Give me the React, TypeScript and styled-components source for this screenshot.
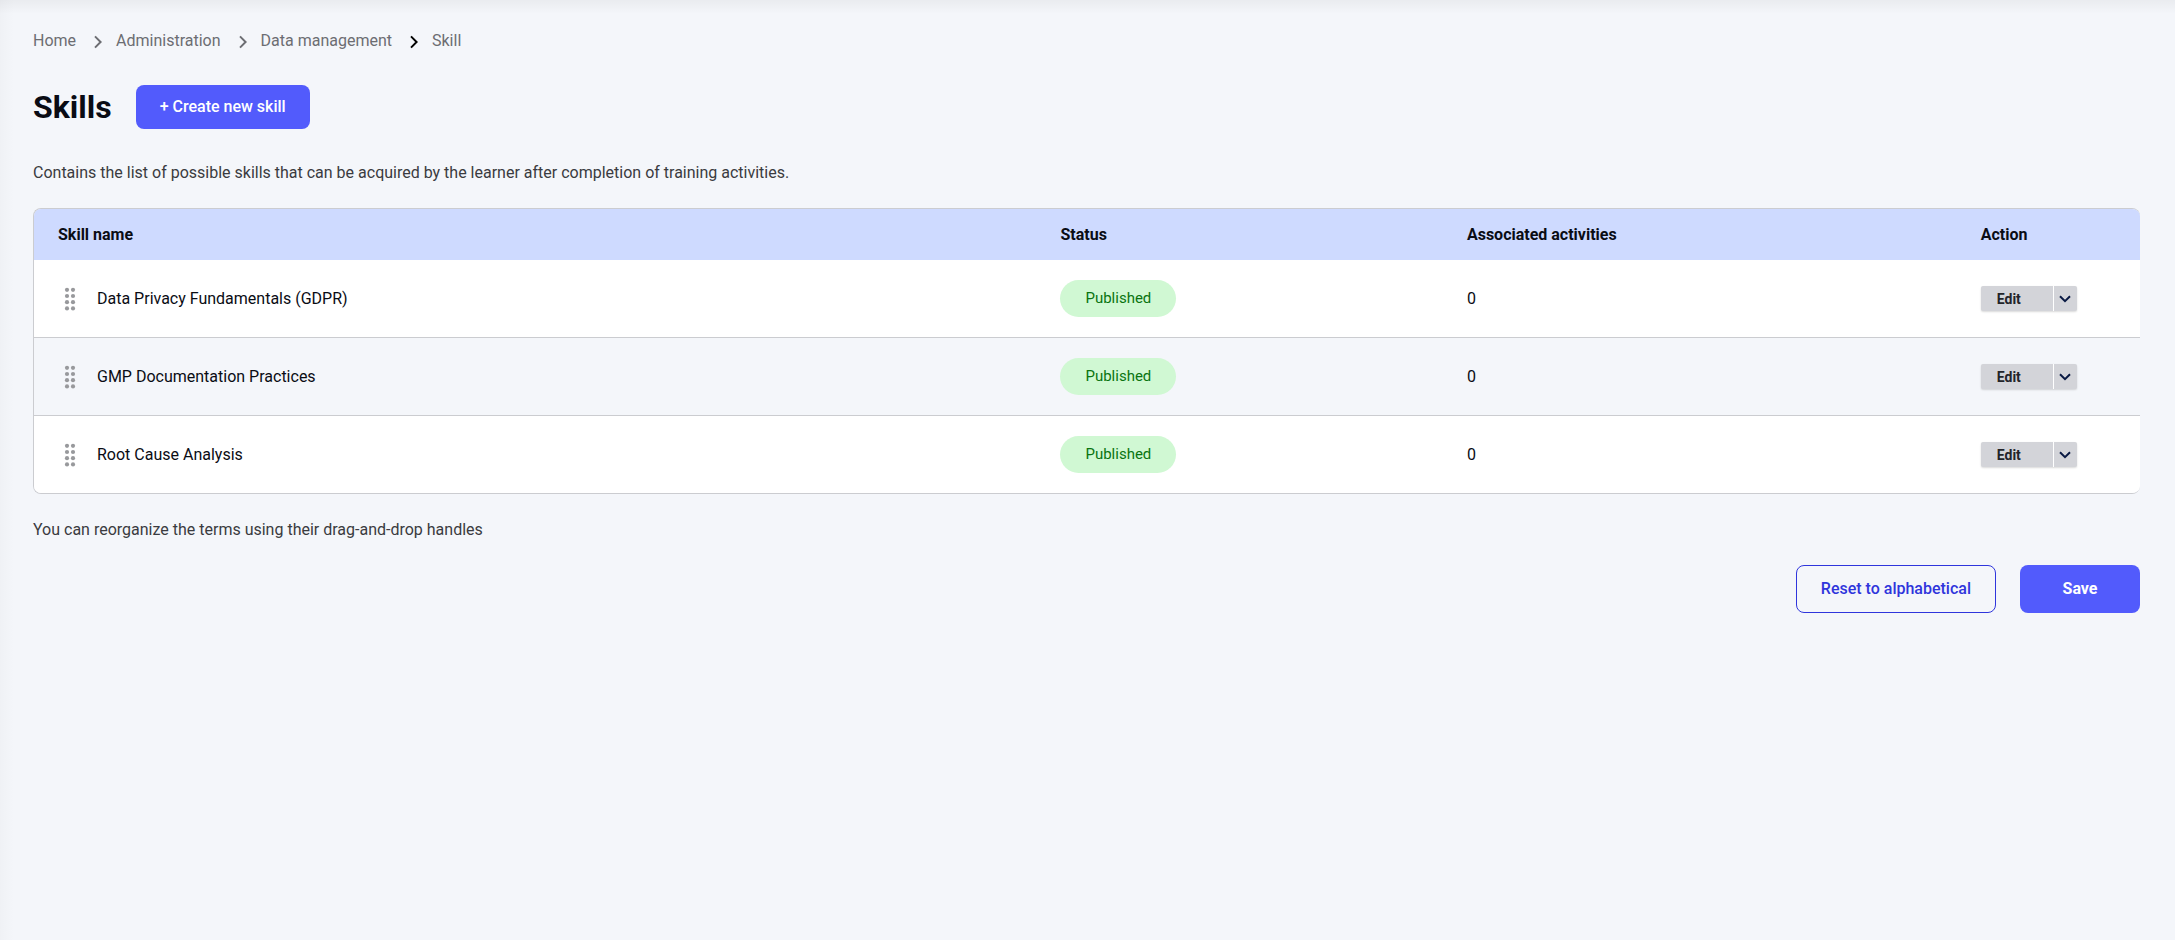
import React from "react";
import styled, { createGlobalStyle } from "styled-components";

const GlobalStyle = createGlobalStyle`
  *, *::before, *::after { box-sizing: border-box; }
  body {
    margin: 0;
    background: #f4f6fa;
    color: #0a0c14;
    font-family: Roboto, "Liberation Sans", sans-serif;
    font-size: 16px;
    line-height: 24px;
  }
  button { font-family: inherit; cursor: pointer; }
`;

const Page = styled.main`
  min-height: 100vh;
  padding: 29px 35px 28px 33px;
  background:
    linear-gradient(to bottom, rgba(0, 0, 0, 0.045), transparent 14px),
    linear-gradient(to right, rgba(0, 0, 0, 0.02), transparent 14px);
`;

const Crumbs = styled.ol`
  display: flex;
  align-items: center;
  margin: 0;
  padding: 0;
  list-style: none;
`;

const Crumb = styled.li`
  display: flex;
  align-items: center;
  color: #6c6d72;
`;

const CrumbLink = styled.a`
  color: inherit;
  text-decoration: none;
`;

const CrumbArrow = styled.svg<{ $strong: boolean }>`
  width: 8px;
  height: 14px;
  margin: 1px 14px 0 18px;
  fill: none;
  stroke: ${(p) => (p.$strong ? "#000" : "#6c6d72")};
  stroke-width: 2;
`;

const TitleRow = styled.header`
  display: flex;
  align-items: center;
  gap: 24px;
  margin-top: 32px;
`;

const Title = styled.h1`
  margin: 0;
  font-size: 32px;
  line-height: 40px;
  font-weight: 700;
`;

const Button = styled.button<{ $variant?: "outline"; $height: number; $minWidth?: number; $weight?: number }>`
  height: ${(p) => p.$height}px;
  min-width: ${(p) => p.$minWidth ?? 0}px;
  padding: 0 24px;
  border: ${(p) => (p.$variant ? "1px solid #2f35dc" : "0")};
  border-radius: 8px;
  background: ${(p) => (p.$variant ? "transparent" : "#525bfc")};
  color: ${(p) => (p.$variant ? "#2f35dc" : "#fff")};
  font-size: 16px;
  line-height: 24px;
  font-weight: ${(p) => p.$weight ?? 500};
`;

const Note = styled.p<{ $top: number }>`
  margin: ${(p) => p.$top}px 0 0;
  color: #3a3b40;
`;

const TableFrame = styled.div`
  margin-top: 23px;
  border: 1px solid #cbccd0;
  border-right: 0;
  border-radius: 8px;
  overflow: hidden;
`;

const Table = styled.table`
  width: 100%;
  table-layout: fixed;
  border-collapse: collapse;
`;

const Column = styled.col<{ $share: number }>`
  width: ${(p) => p.$share}%;
`;

const HeadCell = styled.th`
  height: 51px;
  padding: 0 24px;
  background: #cedaff;
  font-weight: 700;
  text-align: left;
`;

const Row = styled.tr`
  background: #fff;
  &:nth-child(even) { background: #f4f6fa; }
`;

const Cell = styled.td`
  height: 78px;
  padding: 0 24px 1px;
  box-shadow: inset 0 -1px #cbccd0;
  ${Row}:last-child & {
    height: 77px;
    padding-bottom: 0;
    box-shadow: none;
  }
`;

const NameGroup = styled.div`
  display: flex;
  align-items: center;
  padding-left: 6px;
  gap: 21px;
`;

const Handle = styled.button`
  display: flex;
  padding: 0;
  border: 0;
  background: none;
  color: #98999c;
  cursor: grab;
`;

const Badge = styled.span`
  display: flex;
  align-items: center;
  width: max-content;
  height: 37px;
  padding: 0 25px 1px;
  border-radius: 19px;
  background: #d0f8d3;
  color: #0a7410;
  font-size: 15px;
`;

const Split = styled.div`
  display: flex;
  width: 96px;
  height: 25px;
  border-radius: 2px;
  background: #d3d4d9;
  box-shadow: 0 1px 2px rgba(0, 0, 0, 0.15);
`;

const SplitMain = styled.button`
  flex: 1;
  padding: 0 16px;
  border: 0;
  border-right: 1px solid #fff;
  background: none;
  color: #232429;
  font-size: 14px;
  font-weight: 700;
  text-align: left;
`;

const SplitToggle = styled.button`
  display: flex;
  align-items: center;
  justify-content: center;
  width: 23px;
  padding: 0;
  border: 0;
  background: none;
`;

const Actions = styled.div`
  display: flex;
  justify-content: flex-end;
  gap: 24px;
  margin-top: 23px;
`;

const crumbs = ["Home", "Administration", "Data management", "Skill"];
const skills = ["Data Privacy Fundamentals (GDPR)", "GMP Documentation Practices", "Root Cause Analysis"];

const Dots = () => (
  <svg width="12" height="24" viewBox="0 0 12 24" fill="currentColor" aria-hidden="true">
    {[3, 9].map((x) => [2.8, 9, 15.2, 21.4].map((y) => <circle key={`${x}-${y}`} cx={x} cy={y} r="2.1" />))}
  </svg>
);

const Chevron = () => (
  <svg width="12" height="8" viewBox="0 0 12 8" fill="none" stroke="#0a1a44" strokeWidth="2" aria-hidden="true">
    <path d="M1 1.2 6 6.2 11 1.2" />
  </svg>
);

export default function App() {
  return (
    <>
      <GlobalStyle />
      <Page>
        <nav aria-label="Breadcrumb">
          <Crumbs>
            {crumbs.map((name, i) => (
              <Crumb key={name}>
                {i > 0 && (
                  <CrumbArrow $strong={i === crumbs.length - 1} viewBox="0 0 8 14" aria-hidden="true">
                    <path d="M1 1.4 6.6 7 1 12.6" />
                  </CrumbArrow>
                )}
                {i < crumbs.length - 1 ? <CrumbLink href="#">{name}</CrumbLink> : <span aria-current="page">{name}</span>}
              </Crumb>
            ))}
          </Crumbs>
        </nav>
        <TitleRow>
          <Title>Skills</Title>
          <Button $height={44}>+ Create new skill</Button>
        </TitleRow>
        <Note $top={32}>
          Contains the list of possible skills that can be acquired by the learner after completion of training activities.
        </Note>
        <TableFrame>
          <Table>
            <colgroup>
              <Column $share={47.6} />
              <Column $share={19.3} />
              <Column $share={24.4} />
              <Column $share={8.7} />
            </colgroup>
            <thead>
              <tr>
                <HeadCell scope="col">Skill name</HeadCell>
                <HeadCell scope="col">Status</HeadCell>
                <HeadCell scope="col">Associated activities</HeadCell>
                <HeadCell scope="col">Action</HeadCell>
              </tr>
            </thead>
            <tbody>
              {skills.map((skill) => (
                <Row key={skill}>
                  <Cell>
                    <NameGroup>
                      <Handle aria-label={`Move ${skill}`}><Dots /></Handle>
                      {skill}
                    </NameGroup>
                  </Cell>
                  <Cell><Badge>Published</Badge></Cell>
                  <Cell>0</Cell>
                  <Cell>
                    <Split>
                      <SplitMain>Edit</SplitMain>
                      <SplitToggle aria-label={`More actions for ${skill}`}><Chevron /></SplitToggle>
                    </Split>
                  </Cell>
                </Row>
              ))}
            </tbody>
          </Table>
        </TableFrame>
        <Note $top={24}>You can reorganize the terms using their drag-and-drop handles</Note>
        <Actions>
          <Button $variant="outline" $height={48}>Reset to alphabetical</Button>
          <Button $height={48} $minWidth={120} $weight={700}>Save</Button>
        </Actions>
      </Page>
    </>
  );
}
